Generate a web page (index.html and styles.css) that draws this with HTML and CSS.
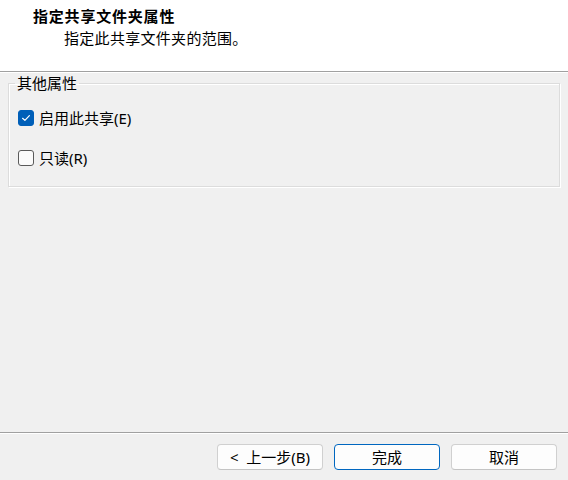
FILE: index.html
```html
<!DOCTYPE html>
<html lang="zh-CN">
<head>
<meta charset="utf-8">
<link rel="stylesheet" href="styles.css">
</head>
<body>
<div class="wizard">
  <header class="head">
    <div class="title">指定共享文件夹属性</div>
    <div class="subtitle">指定此共享文件夹的范围。</div>
  </header>
  <main class="body">
    <fieldset class="group">
      <legend class="legend">其他属性</legend>
      <label class="opt">
        <span class="box checked">
          <svg viewBox="0 0 16 16" width="16" height="16"><path d="M4.6 8.3 L6.9 10.4 L11.4 5.6" fill="none" stroke="#fff" stroke-width="1.2" stroke-linecap="round" stroke-linejoin="round"/></svg>
        </span>
        <span class="txt">启用此共享(E)</span>
      </label>
      <label class="opt">
        <span class="box"></span>
        <span class="txt">只读(R)</span>
      </label>
    </fieldset>
  </main>
  <footer class="foot">
    <button class="btn">&lt;&nbsp; 上一步(B)</button>
    <button class="btn primary">完成</button>
    <button class="btn">取消</button>
  </footer>
</div>
</body>
</html>
```
FILE: styles.css
```css
html, body {
  margin: 0;
  padding: 0;
}
body {
  width: 568px;
  height: 480px;
  background: #f0f0f0;
  font-family: "Noto Sans", "Noto Sans CJK SC", sans-serif;
  font-size: 15px;
  color: #000;
  overflow: hidden;
}
.wizard {
  display: flex;
  flex-direction: column;
  height: 480px;
}
.head {
  background: #fff;
  height: 72px;
  box-sizing: border-box;
  border-bottom: 1px solid #a0a0a0;
  padding: 6px 0 0 33px;
}
.title {
  font-weight: bold;
  font-size: 15px;
  letter-spacing: 0.8px;
  line-height: 20px;
}
.subtitle {
  line-height: 20px;
  padding-left: 31px;
  margin-top: 2px;
  letter-spacing: 0.3px;
}
.body {
  flex: 1;
  border-top: 1px solid #fff;
  padding: 0 8px;
}
.group {
  margin: 0;
  height: 114px;
  box-sizing: border-box;
  border: 1px solid #dcdcdc;
  box-shadow: inset 1px 1px 0 #fff, 1px 1px 0 #fff;
  padding: 17px 9px 0 9px;
  display: flex;
  flex-direction: column;
  gap: 24px;
}
.legend {
  padding: 0 2px;
  margin-left: -3px;
  line-height: 20px;
}
.opt {
  display: flex;
  align-items: center;
  gap: 5px;
  height: 16px;
}
.box {
  width: 16px;
  height: 16px;
  box-sizing: border-box;
  border: 1px solid #5a5a5a;
  border-radius: 3px;
  background: #fbfbfb;
  display: flex;
}
.box.checked {
  background: #005fb8;
  border-color: #005fb8;
}
.box.checked svg {
  margin: -1px;
}
.txt {
  line-height: 20px;
}
.foot {
  height: 48px;
  border-top: 1px solid #a0a0a0;
  box-shadow: inset 0 1px 0 #fff;
  display: flex;
  justify-content: flex-end;
  gap: 11px;
  padding: 11px 11px 0 0;
  box-sizing: border-box;
}
.btn {
  width: 106px;
  height: 26px;
  box-sizing: border-box;
  background: #fdfdfd;
  border: 1px solid #d0d0d0;
  border-bottom-color: #c4c4c4;
  border-radius: 4px;
  font-family: "Noto Sans", "Noto Sans CJK SC", sans-serif;
  font-size: 15px;
  color: #000;
  padding: 0;
  line-height: 22px;
}
.btn.primary {
  border: 1px solid #0067c0;
}
```
